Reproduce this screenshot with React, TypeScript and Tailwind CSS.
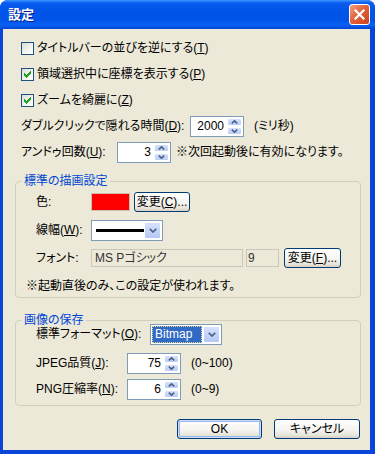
import type { ReactNode } from "react";

const CHECK_PIXELS = [
  [6, 0],
  [5, 1], [6, 1],
  [0, 2], [4, 2], [5, 2], [6, 2],
  [0, 3], [1, 3], [3, 3], [4, 3], [5, 3],
  [0, 4], [1, 4], [2, 4], [3, 4], [4, 4],
  [1, 5], [2, 5], [3, 5],
  [2, 6],
];

function CheckBox({ checked }: { checked?: boolean }) {
  return (
    <span className="w-[13px] h-[13px] shrink-0 border border-[#1C5180] bg-[linear-gradient(135deg,#DCDCD7_0%,#F4F4F0_60%,#FFFFFF_100%)] flex items-center justify-center">
      {checked && (
        <svg width="7" height="7" viewBox="0 0 7 7" shapeRendering="crispEdges">
          {CHECK_PIXELS.map(([x, y]) => (
            <rect key={`${x}-${y}`} x={x} y={y} width="1" height="1" fill="#21A121" />
          ))}
        </svg>
      )}
    </span>
  );
}

function SpinHalf({ up }: { up?: boolean }) {
  return (
    <div className="flex-1 rounded-[2px] border border-white bg-[linear-gradient(180deg,#D6E1FC_0%,#BACCF6_100%)] flex items-center justify-center">
      <svg width="7" height="4" viewBox="0 0 7 4">
        <path
          d={up ? "M0.8 3.4 L3.5 0.8 L6.2 3.4" : "M0.8 0.6 L3.5 3.2 L6.2 0.6"}
          stroke="#4D6185"
          strokeWidth="1.6"
          fill="none"
        />
      </svg>
    </div>
  );
}

function Spin({ value }: { value: string }) {
  return (
    <div className="w-[54px] h-[21px] shrink-0 border border-[#7F9DB9] bg-white flex p-[1px]">
      <span className="flex-1 flex items-center justify-end pr-[3px]">{value}</span>
      <div className="w-[15px] flex flex-col gap-[1px]">
        <SpinHalf up />
        <SpinHalf />
      </div>
    </div>
  );
}

function DropButton() {
  return (
    <div className="w-[17px] rounded-[2px] border border-white bg-[linear-gradient(180deg,#D6E1FC_0%,#B4C8F5_100%)] flex items-center justify-center">
      <svg width="8" height="5" viewBox="0 0 8 5">
        <path d="M0.8 0.8 L4 4 L7.2 0.8" stroke="#4D6185" strokeWidth="1.7" fill="none" />
      </svg>
    </div>
  );
}

function XpButton({
  children,
  width,
  isDefault,
}: {
  children: ReactNode;
  width: string;
  isDefault?: boolean;
}) {
  return (
    <button
      type="button"
      className={`${width} h-[20px] shrink-0 rounded-[3px] border border-[#003C74] bg-[linear-gradient(180deg,#FFFFFF_0%,#F5F4EF_55%,#E6E3D8_85%,#D6D0C5_100%)] flex items-center justify-center ${
        isDefault ? "shadow-[inset_0_0_0_1px_#CEDCF8,inset_0_0_0_2px_#9AB6EE]" : ""
      }`}
    >
      {children}
    </button>
  );
}

function Group({ title, children }: { title: string; children: ReactNode }) {
  return (
    <div className="relative ml-[12px] mr-[9px] border border-[#D0D0BF] rounded-[4px]">
      <span className="absolute -top-[8px] left-[6px] px-[2px] bg-[#ECE9D8] text-[#0046D5] leading-[14px]">
        {title}
      </span>
      {children}
    </div>
  );
}

export default function App() {
  return (
    <div className="w-[375px] h-[454px] flex flex-col rounded-t-[8px] overflow-hidden bg-[#0845D8] text-[12px] leading-[14px] text-black font-['Liberation_Sans','Noto_Sans_CJK_JP',sans-serif] [font-feature-settings:'palt']">
      {/* title bar */}
      <div className="h-[29px] shrink-0 flex items-center justify-between pl-[8px] pr-[5px] bg-[linear-gradient(180deg,#3D95FF_0px,#0A5CEE_3px,#0055E8_10px,#0053E6_20px,#0A62F4_25px,#0044D4_29px)]">
        <span className="text-white font-bold text-[13px] [text-shadow:1px_1px_0_#0A1E8C]">
          設定
        </span>
        <div className="w-[21px] h-[21px] rounded-[3px] border border-white bg-[linear-gradient(135deg,#F0A080_0%,#E2633C_45%,#C8421A_100%)] flex items-center justify-center">
          <svg width="11" height="11" viewBox="0 0 11 11">
            <path d="M1.5 1.5 L9.5 9.5 M9.5 1.5 L1.5 9.5" stroke="white" strokeWidth="2.2" strokeLinecap="square" />
          </svg>
        </div>
      </div>

      <div className="flex-1 flex flex-col ml-[3px] mr-[5px] mb-[4px] bg-[#ECE9D8]">
        <div className="pl-[18px] pt-[6px]">
          <div className="h-[26px] flex items-center gap-[3px]">
            <CheckBox />
            <span>
              タイトルバーの並びを逆にする(<u>T</u>)
            </span>
          </div>
          <div className="h-[26px] flex items-center gap-[3px]">
            <CheckBox checked />
            <span>
              領域選択中に座標を表示する(<u>P</u>)
            </span>
          </div>
          <div className="h-[26px] flex items-center gap-[3px]">
            <CheckBox checked />
            <span>
              ズームを綺麗に(<u>Z</u>)
            </span>
          </div>
          <div className="h-[26px] flex items-center">
            <span className="w-[169px] shrink-0">
              ダブルクリックで隠れる時間(<u>D</u>):
            </span>
            <Spin value="2000" />
            <span className="ml-[10px]">(ミリ秒)</span>
          </div>
          <div className="h-[26px] flex items-center">
            <span className="w-[96px] shrink-0">
              アンドゥ回数(<u>U</u>):
            </span>
            <Spin value="3" />
            <span className="ml-[5px]">※次回起動後に有効になります。</span>
          </div>
        </div>

        <div className="mt-[16px]">
          <Group title="標準の描画設定">
            <div className="pt-[6px] pl-[10px]">
              <div className="h-[28px] flex items-center pl-[10px]">
                <span className="w-[55px] shrink-0">色:</span>
                <div className="w-[39px] h-[18px] bg-[#FF0000] border border-[#C5C2B2]" />
                <div className="ml-[4px]">
                  <XpButton width="w-[56px]">
                    変更(<u>C</u>)...
                  </XpButton>
                </div>
              </div>
              <div className="h-[28px] flex items-center pl-[10px]">
                <span className="w-[55px] shrink-0">
                  線幅(<u>W</u>):
                </span>
                <div className="w-[72px] h-[21px] border border-[#7F9DB9] bg-white flex p-[1px]">
                  <div className="flex-1 flex items-center pl-[3px]">
                    <div className="w-[48px] h-[3px] bg-black" />
                  </div>
                  <DropButton />
                </div>
              </div>
              <div className="h-[28px] flex items-center pl-[10px]">
                <span className="w-[55px] shrink-0">フォント:</span>
                <div className="w-[152px] h-[18px] border border-[#C9C7BA] pl-[3px] pt-[1px] text-[#333333]">
                  MS Pゴシック
                </div>
                <div className="ml-[3px] w-[33px] h-[18px] border border-[#C9C7BA] pl-[1px] pt-[1px] text-[#333333]">
                  9
                </div>
                <div className="ml-[5px]">
                  <XpButton width="w-[57px]">
                    変更(<u>F</u>)...
                  </XpButton>
                </div>
              </div>
              <div className="mt-[4px] h-[20px] flex items-center">
                ※起動直後のみ、この設定が使われます。
              </div>
            </div>
            <div className="h-[1px]" />
          </Group>
        </div>

        <div className="mt-[22px]">
          <Group title="画像の保存">
            <div className="pt-[3px] pb-[6px] pl-[20px] flex flex-col">
              <div className="h-[20px] flex items-center">
                <span className="w-[114px] shrink-0">
                  標準フォーマット(<u>O</u>):
                </span>
                <div className="w-[72px] h-[21px] border border-[#7F9DB9] bg-white flex p-[1px] gap-[1px]">
                  <div className="flex-1 flex items-center pl-[2px] bg-[#316AC5] text-white border border-dotted border-[#E8D890]">
                    Bitmap
                  </div>
                  <DropButton />
                </div>
              </div>
              <div className="mt-[9px] h-[20px] flex items-center">
                <span className="w-[91px] shrink-0">
                  JPEG品質(<u>J</u>):
                </span>
                <Spin value="75" />
                <span className="ml-[10px]">(0~100)</span>
              </div>
              <div className="mt-[6px] h-[20px] flex items-center">
                <span className="w-[91px] shrink-0">
                  PNG圧縮率(<u>N</u>):
                </span>
                <Spin value="6" />
                <span className="ml-[10px]">(0~9)</span>
              </div>
            </div>
          </Group>
        </div>

        <div className="mt-[13px] flex justify-end gap-[12px] pr-[10px]">
          <XpButton width="w-[85px]" isDefault>
            OK
          </XpButton>
          <XpButton width="w-[86px]">キャンセル</XpButton>
        </div>
      </div>
    </div>
  );
}
